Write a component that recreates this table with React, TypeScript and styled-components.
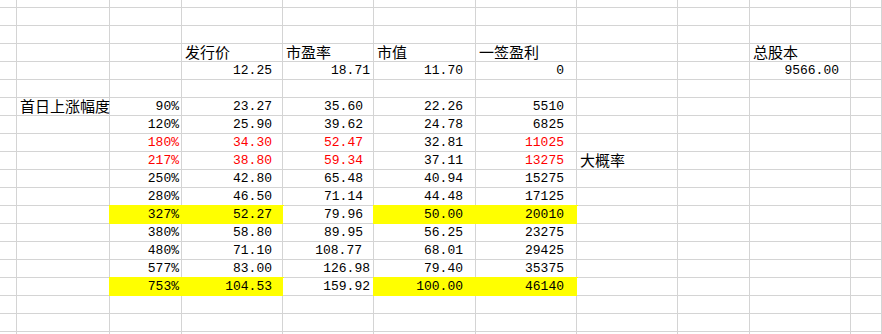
import React from 'react'
import styled, { createGlobalStyle } from 'styled-components'

type Cell = {
  col: number
  text: string
  red?: boolean
  fill?: boolean
  pad?: number
}

const GlobalStyle = createGlobalStyle`
  html, body {
    margin: 0;
    padding: 0;
    background: #ffffff;
    overflow: hidden;
  }
`

const COLS = [17, 93, 72, 101, 91, 102, 101, 101, 72, 101]
const ROW_COUNT = 20

// default right padding per column, Excel seems to leave different gaps
const RIGHT_PAD: Record<number, number> = { 2: 2, 3: 10, 4: 10, 5: 12, 6: 12, 9: 11 }

const ROWS: Record<number, Cell[]> = {
  3: [
    { col: 3, text: '发行价' },
    { col: 4, text: '市盈率' },
    { col: 5, text: '市值' },
    { col: 6, text: '一签盈利' },
    { col: 9, text: '总股本' },
  ],
  4: [
    { col: 3, text: '12.25' },
    { col: 4, text: '18.71', pad: 3 },
    { col: 5, text: '11.70' },
    { col: 6, text: '0' },
    { col: 9, text: '9566.00' },
  ],
}

const DATA: [string, string, string, string, string][] = [
  ['90%', '23.27', '35.60', '22.26', '5510'],
  ['120%', '25.90', '39.62', '24.78', '6825'],
  ['180%', '34.30', '52.47', '32.81', '11025'],
  ['217%', '38.80', '59.34', '37.11', '13275'],
  ['250%', '42.80', '65.48', '40.94', '15275'],
  ['280%', '46.50', '71.14', '44.48', '17125'],
  ['327%', '52.27', '79.96', '50.00', '20010'],
  ['380%', '58.80', '89.95', '56.25', '23275'],
  ['480%', '71.10', '108.77', '68.01', '29425'],
  ['577%', '83.00', '126.98', '79.40', '35375'],
  ['753%', '104.53', '159.92', '100.00', '46140'],
]

const RED_ROWS = [2, 3]
const FILL_ROWS = [6, 10]
const PAD_E: Record<string, number> = { '126.98': 3, '159.92': 3, '108.77': 11 }

DATA.forEach((d, i) => {
  const red = RED_ROWS.includes(i)
  const fill = FILL_ROWS.includes(i)
  const cells: Cell[] = [
    { col: 2, text: d[0], red, fill },
    { col: 3, text: d[1], red, fill },
    { col: 4, text: d[2], red, pad: PAD_E[d[2]] },
    { col: 5, text: d[3], fill },
    { col: 6, text: d[4], red, fill },
  ]
  if (i === 0) cells.unshift({ col: 1, text: '首日上涨幅度' })
  if (i === 3) cells.push({ col: 7, text: '大概率' })
  ROWS[6 + i] = cells
})

const isCjk = (s: string) => /[\u4e00-\u9fff]/.test(s)

export default function App() {
  const cells: React.ReactNode[] = []

  for (let r = 0; r < ROW_COUNT; r++) {
    const row = ROWS[r] || []
    for (let c = 0; c <= COLS.length; c++) {
      const cell = row.find((x) => x.col === c)
      const cjk = cell ? isCjk(cell.text) : false
      cells.push(
        <SheetCell
          key={r + '-' + c}
          $fill={cell?.fill}
          $red={cell?.red}
          $cjk={cjk}
          $pad={cell?.pad ?? RIGHT_PAD[c] ?? 2}
        >
          {cell?.text}
        </SheetCell>
      )
    }
  }

  return (
    <>
      <GlobalStyle />
      <Sheet>{cells}</Sheet>
    </>
  )
}

const Sheet = styled.div`
  display: grid;
  grid-template-columns: ${COLS.map((w) => w + 'px').join(' ')} 1fr;
  grid-template-rows: 8px repeat(${ROW_COUNT - 1}, 18px);
  width: 882px;
  height: 334px;
  overflow: hidden;
  background: #ffffff;
`

const SheetCell = styled.div<{
  $fill?: boolean
  $red?: boolean
  $cjk?: boolean
  $pad: number
}>`
  box-sizing: border-box;
  display: flex;
  align-items: flex-end;
  justify-content: ${({ $cjk }) => ($cjk ? 'flex-start' : 'flex-end')};
  padding: ${({ $cjk, $pad }) => ($cjk ? '0 0 1px 3px' : `0 ${$pad}px 1px 0`)};
  border-right: 1px solid ${({ $fill }) => ($fill ? '#ffff00' : '#d4d4d4')};
  border-bottom: 1px solid ${({ $fill }) => ($fill ? '#ffff00' : '#d4d4d4')};
  background: ${({ $fill }) => ($fill ? '#ffff00' : '#ffffff')};
  box-shadow: ${({ $fill }) => ($fill ? '0 0 0 1px #ffff00' : 'none')};
  color: ${({ $red }) => ($red ? '#ff0000' : '#000000')};
  font-family: ${({ $cjk }) =>
    $cjk
      ? '"Noto Sans CJK SC", "Liberation Sans", sans-serif'
      : '"Liberation Mono", "DejaVu Sans Mono", monospace'};
  font-size: ${({ $cjk }) => ($cjk ? '15px' : '13px')};
  line-height: ${({ $cjk }) => ($cjk ? '16px' : '14px')};
  white-space: nowrap;
`
